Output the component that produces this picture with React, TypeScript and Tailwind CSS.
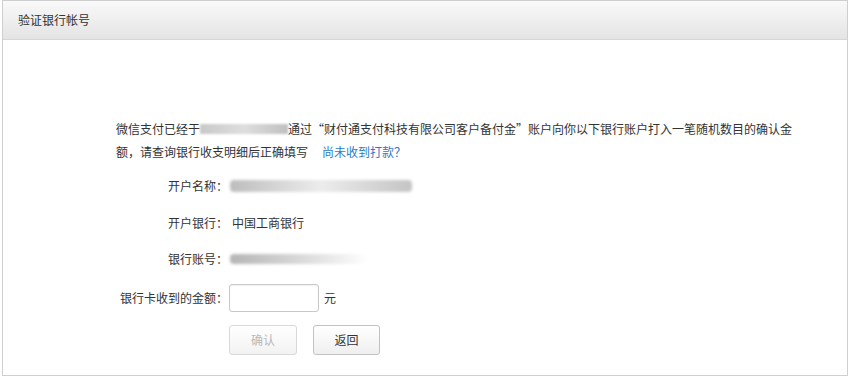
import React from "react";

export default function App() {
  return (
    <div
      className="w-[850px] h-[378px] bg-white text-[12px] text-[#333]"
      style={{ fontFamily: '"Noto Sans CJK SC", "Microsoft YaHei", sans-serif' }}
    >
      <div className="ml-[2px] w-[846px] h-[376px] border border-[#cfcfcf] flex flex-col">
        <div className="h-[39px] shrink-0 bg-gradient-to-b from-[#f9f9f9] to-[#e4e4e4] border-b border-[#d6d6d6] flex items-center pl-[15px] text-[#333]">
          验证银行帐号
        </div>
        <div className="flex flex-col pl-[113px] pt-[77px]">
          <div className="leading-[23px]">
            <div className="whitespace-nowrap flex items-center">
              <span>微信支付已经于</span>
              <span className="inline-block w-[88px] h-[10px] blur-[1.2px] bg-gradient-to-r from-[#c8c8c8] via-[#dedede] to-[#c0c0c0]"></span>
              <span>通过“财付通支付科技有限公司客户备付金”账户向你以下银行账户打入一笔随机数目的确认金</span>
            </div>
            <div className="whitespace-nowrap">
              <span>额，请查询银行收支明细后正确填写</span>
              <a className="ml-[14px] text-[#2b7cc4] cursor-pointer">尚未收到打款？</a>
            </div>
          </div>

          <div className="flex items-center h-[24px] mt-[11px]">
            <div className="w-[112px] text-right">开户名称：</div>
            <div className="w-[182px] h-[12px] ml-[2px] rounded-sm blur-[1.5px] bg-gradient-to-r from-[#bdbdbd] via-[#ececec] to-[#c4c4c4]"></div>
          </div>
          <div className="flex items-center h-[24px] mt-[13px]">
            <div className="w-[112px] text-right">开户银行：</div>
            <div className="ml-[4px]">中国工商银行</div>
          </div>
          <div className="flex items-center h-[24px] mt-[12px]">
            <div className="w-[112px] text-right">银行账号：</div>
            <div className="w-[138px] h-[10px] ml-[2px] rounded-sm blur-[1.5px] bg-gradient-to-r from-[#b5b5b5] via-[#d8d8d8] to-[#ffffff]"></div>
          </div>
          <div className="flex items-center h-[28px] mt-[13px]">
            <div className="w-[112px] text-right">银行卡收到的金额：</div>
            <input
              className="ml-[1px] w-[90px] h-[28px] border border-[#c8c8c8] rounded-[3px] bg-white outline-none px-1 shadow-[inset_0_1px_2px_rgba(0,0,0,0.06)]"
            />
            <span className="ml-[5px]">元</span>
          </div>
          <div className="flex items-center mt-[13px] pl-[113px] gap-[16px]">
            <button
              disabled
              className="w-[68px] h-[30px] border border-[#d9d9d9] rounded-[3px] bg-gradient-to-b from-[#ffffff] to-[#f2f2f2] text-[#b8b8b8]"
            >
              确认
            </button>
            <button className="w-[67px] h-[30px] border border-[#c2c2c2] rounded-[3px] bg-gradient-to-b from-[#ffffff] to-[#efefef] text-[#333]">
              返回
            </button>
          </div>
        </div>
      </div>
    </div>
  );
}
